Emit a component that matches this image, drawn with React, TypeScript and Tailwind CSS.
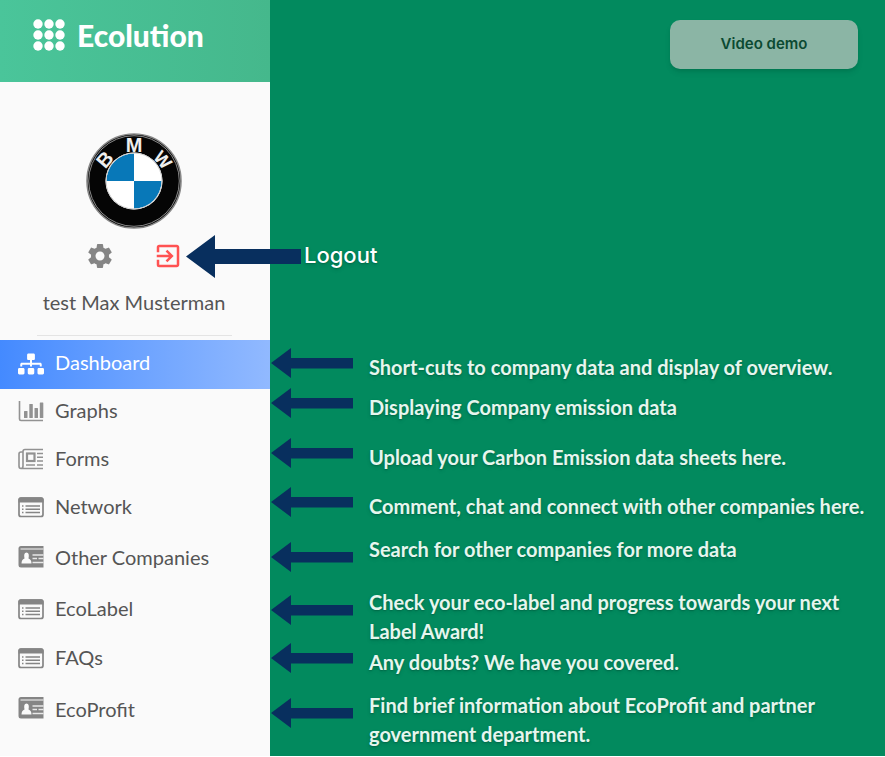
import React from "react";
import { MdExitToApp, MdSettings } from "react-icons/md";
import { FaSitemap } from "react-icons/fa";

type IconProps = { className?: string };

function BarsIcon({ className }: IconProps) {
  return (
    <svg viewBox="0 0 26 22" className={className} fill="currentColor" aria-hidden="true">
      <path d="M1.500 1v18q0 1.500 1.500 1.500H25" fill="none" stroke="currentColor" strokeWidth="1.600" />
      <rect x="6" y="11" width="3.500" height="7" rx="0.500" />
      <rect x="11.300" y="4" width="3.500" height="14" rx="0.500" />
      <rect x="16.500" y="8" width="3.500" height="10" rx="0.500" />
      <rect x="21.800" y="2.500" width="3.500" height="15.500" rx="0.500" />
    </svg>
  );
}

function NewsIcon({ className }: IconProps) {
  return (
    <svg viewBox="0 0 26 22" className={className} fill="none" stroke="currentColor" strokeWidth="1.600" aria-hidden="true">
      <path d="M25 1.500H7Q5 1.500 5 3.500V18q0 2.500-2 2.500T1 18V6q0-2 2-2h2M3 20.500h22" />
      <rect x="9" y="5.500" width="7.500" height="7.500" strokeWidth="2.200" />
      <path d="M19 5.500h6M19 9.300h6M19 13h6M8 17h9M19 17h6" />
    </svg>
  );
}

function ListIcon({ className }: IconProps) {
  return (
    <svg viewBox="0 0 26 22" className={className} fill="none" stroke="currentColor" aria-hidden="true">
      <rect x="1" y="2" width="24" height="18.500" rx="2" strokeWidth="1.700" />
      <path d="M3 1.200h20q2.500 0 2.500 2.300V6.500H0.500V3.500Q0.500 1.200 3 1.200z" fill="currentColor" stroke="none" />
      <path d="M7.500 10H22M7.500 13.300H22M7.500 16.600H22M4 10h1.500M4 13.300h1.500M4 16.600h1.500" strokeWidth="1.500" />
    </svg>
  );
}

function CardIcon({ className }: IconProps) {
  return (
    <svg viewBox="0 0 26 22" className={className} aria-hidden="true">
      <path d="M25.500 0H3Q0.500 0 0.500 2.500V19q0 2.500 2.500 2.500h22.500z" fill="currentColor" />
      <path d="M2.500 3H25.500" stroke="#e4e4e4" strokeWidth="1.200" />
      <path d="M3.500 17.500q0-4 3-5-1.200-6 2-6t2 6q3 1 3 5z" fill="#fafafa" />
      <path d="M14.500 9h11M14.500 12.500H19M20.500 12.500h5M14.500 16.500h11" stroke="#e8e8e8" strokeWidth="1.400" />
    </svg>
  );
}

function DotsLogo() {
  return (
    <svg viewBox="0 0 32 32" className="size-8" fill="white" aria-hidden="true">
      {[5, 16, 27].map((y) => [5, 16, 27].map((x) => <circle key={`${x}-${y}`} cx={x} cy={y} r="4.700" />))}
    </svg>
  );
}

function BmwLogo() {
  return (
    <svg viewBox="0 0 96 96" className="size-24" role="img" aria-label="BMW">
      <circle cx="48" cy="48" r="47" fill="#050505" stroke="#888" strokeWidth="1.600" />
      <circle cx="48" cy="48" r="45.300" fill="none" stroke="#8a8a8a" strokeWidth="1" />
      <circle cx="48" cy="48" r="28.500" fill="#fff" />
      <path d="M48 48V20.500A27.500 27.500 0 0 0 20.500 48zM48 48v27.500A27.500 27.500 0 0 0 75.500 48z" fill="#0878b8" />
      <circle cx="48" cy="48" r="28" fill="none" stroke="#ccc" strokeWidth="1" />
      <g fill="#eee" fontFamily="Liberation Sans, sans-serif" fontSize="20" fontWeight="700" textAnchor="middle">
        <text x="48" y="19">M</text>
        <text x="0" y="0" transform="translate(24 31) rotate(-49)">B</text>
        <text x="0" y="0" transform="translate(72 31) rotate(49)" fontSize="18">W</text>
      </g>
    </svg>
  );
}

function Arrow() {
  return (
    <svg viewBox="0 0 83 30" className="h-[30px] w-[83px] shrink-0" fill="#082f5e" aria-hidden="true">
      <path d="M0 15 20 0v10h62v10.500H20V30z" />
    </svg>
  );
}

const menu = [
  { label: "Dashboard", Icon: FaSitemap, row: "h-[49px] pb-0.5 bg-linear-to-r from-[#448aff] to-[#91b9ff] text-white", icon: "text-white" },
  { label: "Graphs", Icon: BarsIcon, row: "h-12 pb-1", icon: "text-[#929292]" },
  { label: "Forms", Icon: NewsIcon, row: "h-12 pb-1", icon: "text-[#929292]" },
  { label: "Network", Icon: ListIcon, row: "h-12 pb-1", icon: "text-[#858585]" },
  { label: "Other Companies", Icon: CardIcon, row: "h-[51px]", icon: "text-[#858585] mb-1" },
  { label: "EcoLabel", Icon: ListIcon, row: "h-[50px]", icon: "text-[#858585]" },
  { label: "FAQs", Icon: ListIcon, row: "h-12", icon: "text-[#858585]" },
  { label: "EcoProfit", Icon: CardIcon, row: "h-14", icon: "text-[#858585] mb-1" },
];

const notes = [
  { text: "Short-cuts to company data and display of overview.", row: "h-10", arrow: "", note: "pt-[5px]" },
  { text: "Displaying Company emission data", row: "h-[50px]", arrow: "", note: "pt-[5px]" },
  { text: "Upload your Carbon Emission data sheets here.", row: "h-[49px]", arrow: "", note: "pt-[5px]" },
  { text: "Comment, chat and connect with other companies here.", row: "h-12", arrow: "", note: "pt-[5px]" },
  { text: "Search for other companies for more data", row: "h-[53px]", arrow: "pt-[7px]", note: "" },
  { text: "Check your eco-label and progress towards your next Label Award!", row: "h-[55px]", arrow: "pt-[7px]", note: "" },
  { text: "Any doubts? We have you covered.", row: "h-12", arrow: "", note: "pt-[5px]" },
  { text: "Find brief information about EcoProfit and partner government department.", row: "h-16", arrow: "pt-[7px]", note: "" },
];

export default function App() {
  return (
    <div className="flex min-h-screen border-b border-white bg-[#028a5e]">
      <aside className="flex w-[270px] shrink-0 flex-col bg-[#fafafa] font-[Lato,sans-serif] text-xl text-[#555]">
        <header className="flex h-[82px] items-center gap-3 bg-linear-to-r from-[#4ac59a] to-[#45b88c] pb-3 pl-[33px]">
          <DotsLogo />
          <span className="text-[30px] leading-9 font-black text-white">Ecolution</span>
        </header>
        <div className="flex flex-col items-center pt-[51px] pr-0.5">
          <BmwLogo />
          <div className="mt-3 flex gap-[38px]">
            <button aria-label="Settings" className="p-0">
              <MdSettings className="size-[30px] text-[#858585]" />
            </button>
            <div className="relative">
              <button id="logout" aria-label="Logout" className="block p-0">
                <MdExitToApp className="size-[30px] text-[#ff5252]" />
              </button>
              <div className="absolute -top-1.5 left-[33px] flex items-center gap-[3px]">
                <svg viewBox="0 0 115 43" className="h-[43px] w-[115px] shrink-0" fill="#082f5e" aria-hidden="true">
                  <path d="M0 21.500 29 0v14h86v15H29v14z" />
                </svg>
                <label htmlFor="logout" className="pb-0.5 font-[Inter,sans-serif] text-[22px] font-medium text-white text-shadow-md">
                  Logout
                </label>
              </div>
            </div>
          </div>
          <p className="mt-[17px] leading-7">test Max Musterman</p>
          <hr className="mt-[19px] w-[195px] border-[#e4e4e4]" />
        </div>
        <nav className="mt-1">
          {menu.map(({ label, Icon, row, icon }) => (
            <a key={label} href="#" className={`flex items-center gap-[11px] pl-[18px] ${row}`}>
              <Icon className={`h-[22px] w-[26px] shrink-0 ${icon}`} />
              <span className="pb-[3px]">{label}</span>
            </a>
          ))}
        </nav>
      </aside>
      <main className="flex min-w-0 flex-1 flex-col">
        <div className="flex h-[348px] justify-end pt-5 pr-[27px]">
          <button className="h-[49px] w-[188px] rounded-[10px] bg-[#8bb5a5] font-[Inter,sans-serif] text-[15px] font-semibold text-[#0b4a32] shadow-md">
            Video demo
          </button>
        </div>
        <ul className="font-[Lato,sans-serif] text-[20px] leading-[29px] font-bold text-[#e6f6ee] text-shadow-md">
          {notes.map(({ text, row, arrow, note }) => (
            <li key={text} className={`flex items-start gap-[15px] pr-2 pl-px ${row}`}>
              <span className={arrow}>
                <Arrow />
              </span>
              <p className={note}>{text}</p>
            </li>
          ))}
        </ul>
      </main>
    </div>
  );
}
